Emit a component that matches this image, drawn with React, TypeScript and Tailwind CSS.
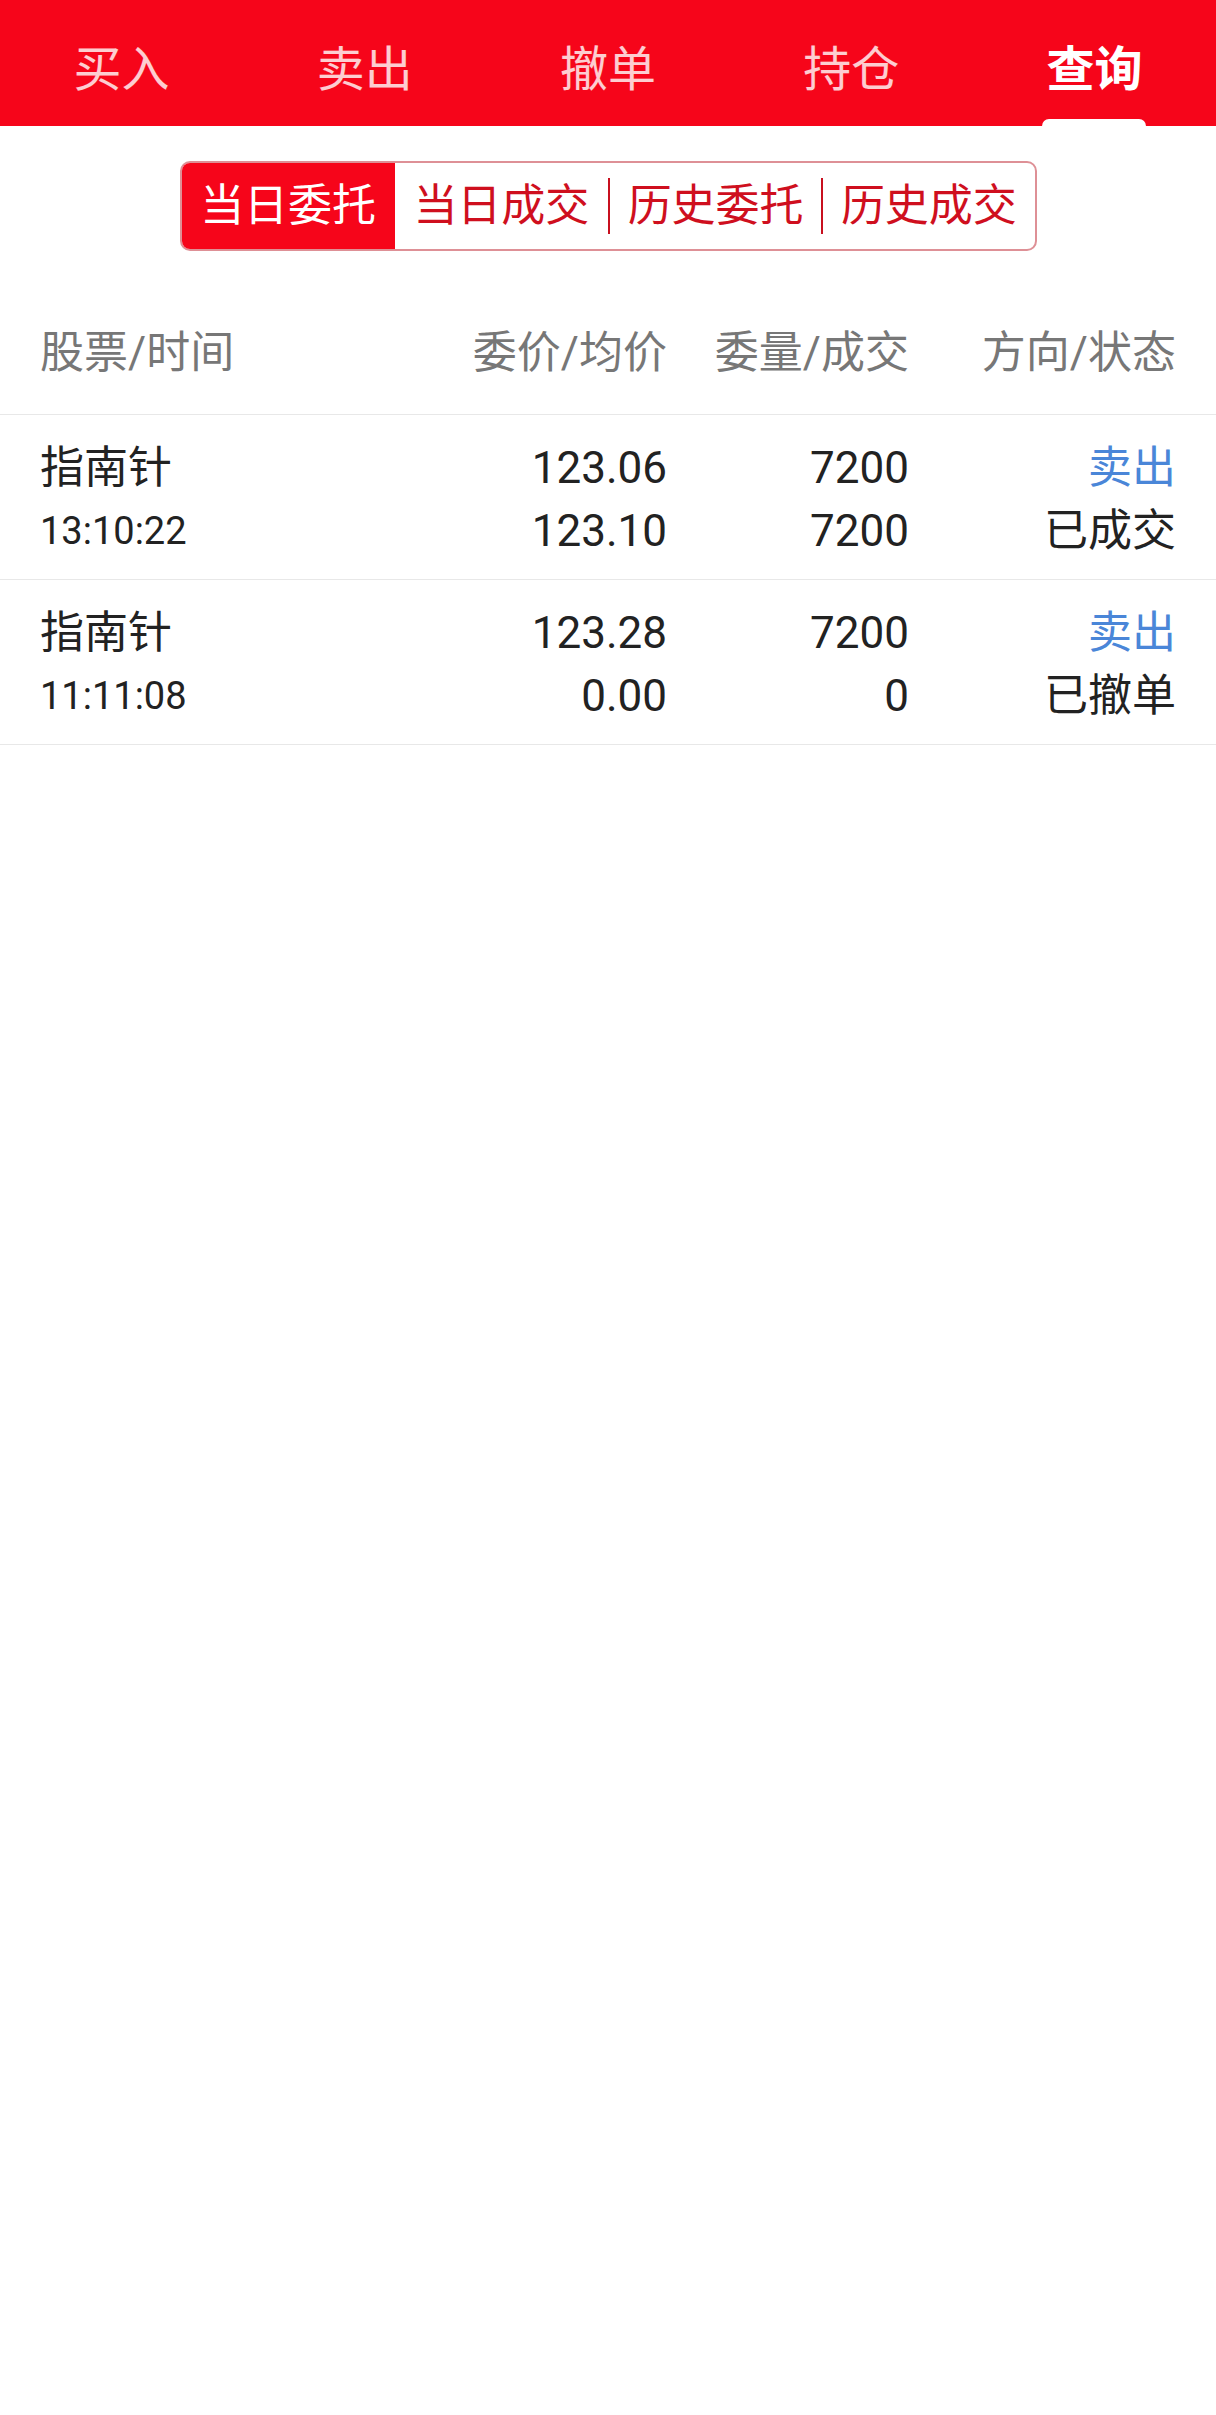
import { useState } from 'react'

const FONT = "font-['Roboto','Noto_Sans_CJK_SC',sans-serif]"

const tabs = ['买入', '卖出', '撤单', '持仓', '查询']
const segments = ['当日委托', '当日成交', '历史委托', '历史成交']

const orders = [
  { name: '指南针', time: '13:10:22', price: '123.06', avg: '123.10', qty: '7200', deal: '7200', side: '卖出', status: '已成交' },
  { name: '指南针', time: '11:11:08', price: '123.28', avg: '0.00', qty: '7200', deal: '0', side: '卖出', status: '已撤单' },
]

function TopTabs({ active }: { active: number }) {
  return (
    <div className="flex h-[126px] bg-[#f6051a]">
      {tabs.map((t, i) => (
        <div key={t} className="relative flex flex-1 items-start justify-center pt-[40px]">
          <span
            className={
              i === active
                ? 'text-[48px] leading-[60px] font-bold text-white'
                : 'text-[48px] leading-[60px] text-white/80'
            }
          >
            {t}
          </span>
          {i === active && (
            <div className="absolute bottom-0 h-[7px] w-[104px] rounded-t-full bg-white" />
          )}
        </div>
      ))}
    </div>
  )
}

function Segmented({ active, onChange }: { active: number; onChange: (i: number) => void }) {
  return (
    <div className="mt-[35px] flex justify-center">
      <div className="flex h-[90px] w-[857px] overflow-hidden rounded-[10px] border-2 border-[#de9096]">
        {segments.map((s, i) => (
          <div key={s} className="flex flex-1 items-center">
            {i > 0 && i !== active && i - 1 !== active && (
              <div className="h-[56px] w-[2px] bg-[#c8101f]" />
            )}
            <button
              onClick={() => onChange(i)}
              className={
                i === active
                  ? 'flex h-full flex-1 items-center justify-center bg-[#f6051a] text-[44px] text-white'
                  : 'flex h-full flex-1 items-center justify-center text-[44px] text-[#cf0f1e]'
              }
            >
              {s}
            </button>
          </div>
        ))}
      </div>
    </div>
  )
}

export default function App() {
  const [seg, setSeg] = useState(0)

  return (
    <div className={`${FONT} min-h-screen bg-white`}>
      <TopTabs active={4} />
      <Segmented active={seg} onChange={setSeg} />

      {/* table header */}
      <div className="mt-[34px] grid h-[130px] grid-cols-[385px_242px_242px_267px] items-center border-b border-[#e8e8e8] px-[40px] pt-[6px] text-[44px] text-[#777777]">
        <div>股票/时间</div>
        <div className="text-right">委价/均价</div>
        <div className="text-right">委量/成交</div>
        <div className="text-right">方向/状态</div>
      </div>

      {orders.map((o, i) => (
        <div
          key={i}
          className="grid h-[165px] grid-cols-[385px_242px_242px_267px] content-center border-b border-[#e8e8e8] px-[40px] pt-[6px] text-[#222222]"
        >
          <div>
            <div className="text-[44px] leading-[63px]">{o.name}</div>
            <div className="text-[38px] leading-[63px]">{o.time}</div>
          </div>
          <div className="text-right text-[44px] leading-[63px]">
            <div>{o.price}</div>
            <div>{o.avg}</div>
          </div>
          <div className="text-right text-[44px] leading-[63px]">
            <div>{o.qty}</div>
            <div>{o.deal}</div>
          </div>
          <div className="text-right text-[44px] leading-[63px]">
            <div className="text-[#4a86d8]">{o.side}</div>
            <div>{o.status}</div>
          </div>
        </div>
      ))}
    </div>
  )
}
